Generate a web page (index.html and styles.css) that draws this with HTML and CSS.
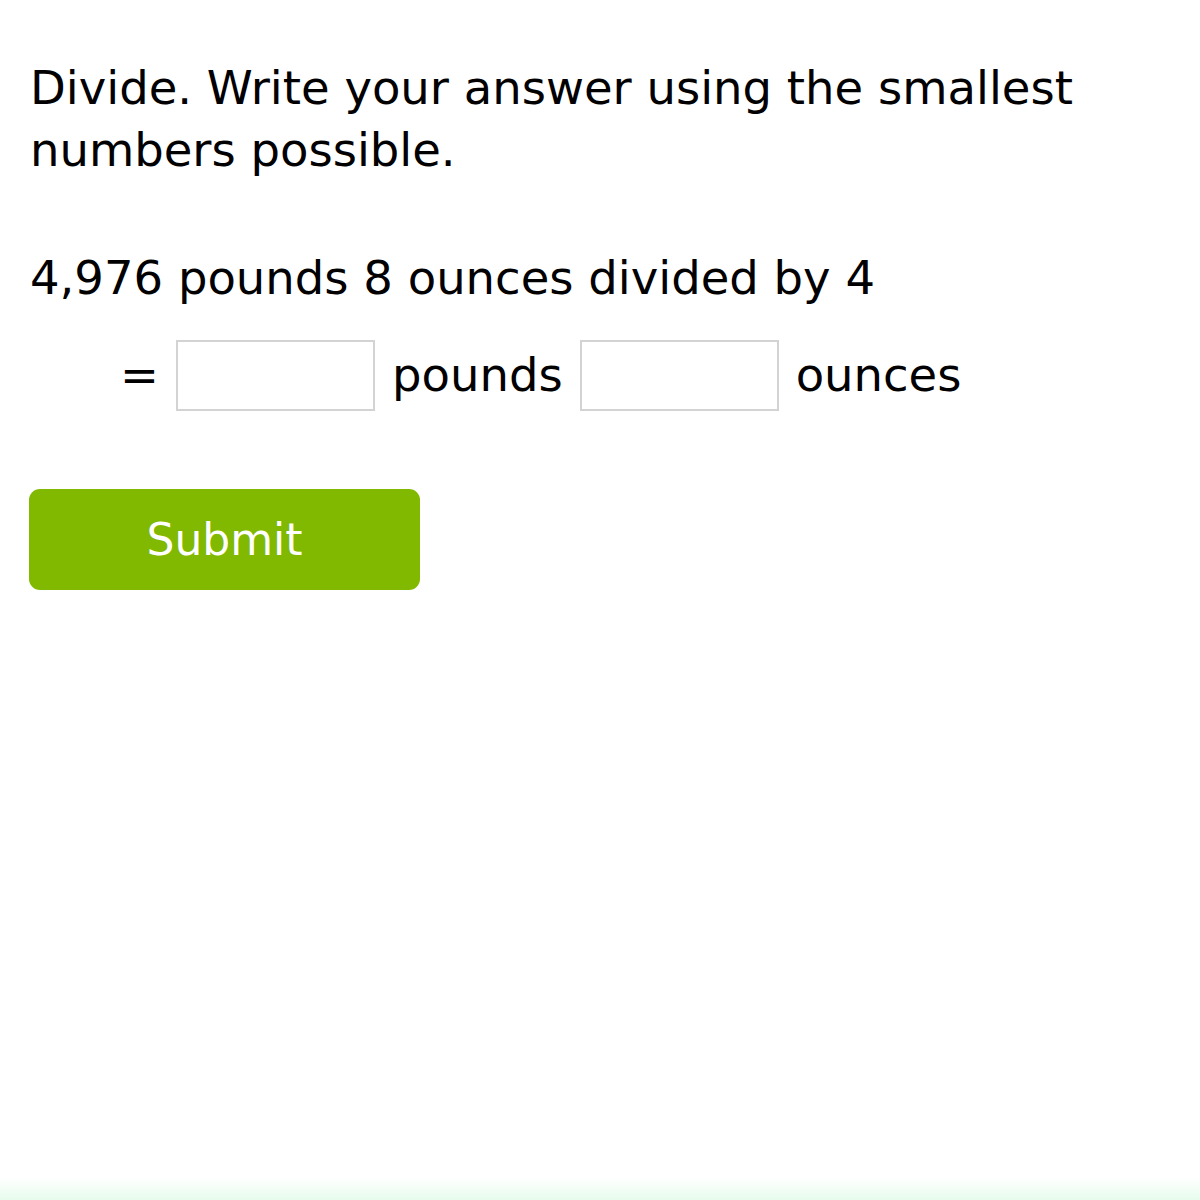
FILE: index.html
```html
<!doctype html>
<html>
<head>
<meta charset="utf-8">
<title>Divide</title>
<link rel="stylesheet" href="styles.css">
</head>
<body>
<div class="question">
	<p class="prompt">Divide. Write your answer using the smallest numbers possible.</p>
	<p class="problem">4,976 pounds 8 ounces divided by 4</p>
	<div class="answer">
		<span class="eq">=</span>
		<input class="box" type="text">
		<span>pounds</span>
		<input class="box" type="text">
		<span>ounces</span>
	</div>
	<button class="submit">Submit</button>
</div>
</body>
</html>
```

FILE: styles.css
```css
*{margin:0; padding:0; box-sizing:border-box;}
html{height:100%; background:linear-gradient(to bottom,#fff 0,#fff 1178px,#e6fcec 1200px);}
body{font-family:"DejaVu Sans",Verdana,sans-serif; font-size:46.5px; line-height:62px; color:#000; }
.question{padding:57px 0 0 30px; width:1120px;}
.prompt{width:1080px;}
.problem{margin-top:66px;}
.answer{display:flex; align-items:center; margin:30px 0 0 90px; height:72px;}
.answer span{line-height:72px;}
.box{width:199px; height:71px; border:2px solid #d3d3d3; background:#fff; outline:none; margin:0 17px 0 17px;}
.submit{display:block; margin:78px 0 0 -1px; width:391px; height:101px; border:0; border-radius:11px; background:#80b900; color:#fff; font-family:"DejaVu Sans",Verdana,sans-serif; font-size:44px; cursor:pointer;}
```
